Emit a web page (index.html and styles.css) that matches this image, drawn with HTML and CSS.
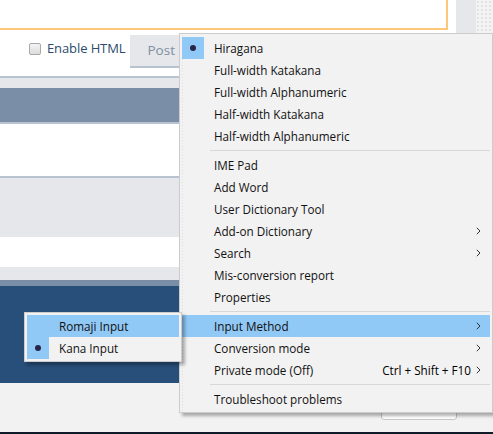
FILE: index.html
```html
<!DOCTYPE html>
<html>
<head>
<meta charset="utf-8">
<link rel="stylesheet" href="styles.css">
</head>
<body>
<div class="page">
  <div class="top">
    <div class="left-col">
      <div class="editor"></div>
      <div class="toolbar">
        <label class="check"><span class="box"></span><span class="check-label">Enable HTML</span></label>
        <div class="post">Post</div>
      </div>
    </div>
    <div class="gap"></div>
    <div class="track"></div>
    <div class="dots"></div>
  </div>
  <div class="band white h8"></div>
  <div class="band line"></div>
  <div class="band grey h10"></div>
  <div class="band slate h34"></div>
  <div class="band line"></div>
  <div class="band white h52"></div>
  <div class="band line"></div>
  <div class="band grey h59"></div>
  <div class="band white h30"></div>
  <div class="band grey h13"></div>
  <div class="band slate h6"></div>
  <div class="band navy h97"></div>
  <div class="band foot">
    <div class="foot-btn"></div>
  </div>
  <div class="band dark"></div>
</div>

<div class="menu main-menu">
  <div class="item checked"><span class="ic"><span class="dot"></span></span><span class="txt">Hiragana</span></div>
  <div class="item"><span class="ic"></span><span class="txt">Full-width Katakana</span></div>
  <div class="item"><span class="ic"></span><span class="txt">Full-width Alphanumeric</span></div>
  <div class="item"><span class="ic"></span><span class="txt">Half-width Katakana</span></div>
  <div class="item"><span class="ic"></span><span class="txt">Half-width Alphanumeric</span></div>
  <div class="sep"></div>
  <div class="item"><span class="ic"></span><span class="txt">IME Pad</span></div>
  <div class="item"><span class="ic"></span><span class="txt">Add Word</span></div>
  <div class="item"><span class="ic"></span><span class="txt">User Dictionary Tool</span></div>
  <div class="item"><span class="ic"></span><span class="txt">Add-on Dictionary</span><span class="arrow"><svg width="5" height="8" viewBox="0 0 5 8"><polyline points="0.8,0.8 4,4 0.8,7.2" fill="none" stroke="#333" stroke-width="1"/></svg></span></div>
  <div class="item"><span class="ic"></span><span class="txt">Search</span><span class="arrow"><svg width="5" height="8" viewBox="0 0 5 8"><polyline points="0.8,0.8 4,4 0.8,7.2" fill="none" stroke="#333" stroke-width="1"/></svg></span></div>
  <div class="item"><span class="ic"></span><span class="txt">Mis-conversion report</span></div>
  <div class="item"><span class="ic"></span><span class="txt">Properties</span></div>
  <div class="sep"></div>
  <div class="item hot"><span class="ic"></span><span class="txt">Input Method</span><span class="arrow"><svg width="5" height="8" viewBox="0 0 5 8"><polyline points="0.8,0.8 4,4 0.8,7.2" fill="none" stroke="#333" stroke-width="1"/></svg></span></div>
  <div class="item"><span class="ic"></span><span class="txt">Conversion mode</span><span class="arrow"><svg width="5" height="8" viewBox="0 0 5 8"><polyline points="0.8,0.8 4,4 0.8,7.2" fill="none" stroke="#333" stroke-width="1"/></svg></span></div>
  <div class="item"><span class="ic"></span><span class="txt">Private mode (Off)</span><span class="key">Ctrl + Shift + F10</span><span class="arrow"><svg width="5" height="8" viewBox="0 0 5 8"><polyline points="0.8,0.8 4,4 0.8,7.2" fill="none" stroke="#333" stroke-width="1"/></svg></span></div>
  <div class="sep"></div>
  <div class="item"><span class="ic"></span><span class="txt">Troubleshoot problems</span></div>
</div>

<div class="menu sub-menu">
  <div class="item hot"><span class="ic"></span><span class="txt">Romaji Input</span></div>
  <div class="item checked"><span class="ic"><span class="dot"></span></span><span class="txt">Kana Input</span></div>
</div>
</body>
</html>
```

FILE: styles.css
```css
html, body {
  margin: 0;
  padding: 0;
}
body {
  width: 493px;
  height: 434px;
  overflow: hidden;
  position: relative;
  background: #f2f2f2;
  font-family: "Open Sans", "Noto Sans", sans-serif;
}
.page {
  display: flex;
  flex-direction: column;
  width: 493px;
}
.top {
  display: flex;
  height: 68px;
  background: #fff;
}
.left-col {
  width: 448px;
  display: flex;
  flex-direction: column;
}
.editor {
  height: 28px;
  background: #fff;
  border-right: 2px solid #fcc67b;
  border-bottom: 2px solid #fcc67b;
}
.toolbar {
  height: 38px;
  display: flex;
  align-items: flex-end;
  padding-left: 29px;
}
.check {
  display: flex;
  align-items: center;
  height: 33px;
  align-self: flex-end;
  margin-bottom: 2px;
}
.box {
  width: 10px;
  height: 10px;
  border: 1px solid #a9a9a9;
  border-radius: 2px;
  background: linear-gradient(#f4f4f4, #dcdcdc);
  margin-right: 6px;
  margin-top: -2px;
}
.check-label {
  font-size: 13px;
  color: #2c4b6c;
  margin-top: -3px;
  letter-spacing: -0.1px;
}
.post {
  margin-left: 5px;
  width: 80px;
  height: 31px;
  background: #e6e7eb;
  border-bottom: 2px solid #b6c2d0;
  color: #7f8fa3;
  font-size: 13.5px;
  line-height: 31px;
  padding-left: 17px;
  box-sizing: content-box;
}
.gap { width: 8px; }
.track { width: 20px; background: #e6e7eb; }
.dots {
  flex: 1;
  background-color: #f3f3f3;
  background-image: radial-gradient(#d8d8d8 0.6px, transparent 0.9px);
  background-size: 4px 4px;
}
.band { width: 100%; }
.white { background: #fff; }
.grey { background: #e6e7eb; }
.slate { background: #7a8ea8; }
.navy { background: #284e7a; }
.line { height: 2px; background: #b7c3d1; }
.h6 { height: 6px; }
.h8 { height: 8px; }
.h10 { height: 10px; }
.h13 { height: 13px; }
.h30 { height: 30px; }
.h34 { height: 34px; }
.h52 { height: 52px; }
.h59 { height: 59px; }
.h97 { height: 97px; }
.foot {
  height: 49px;
  background: #f2f2f2;
  display: flex;
  align-items: flex-end;
  padding-left: 381px;
  box-sizing: border-box;
}
.foot-btn {
  width: 74px;
  height: 26px;
  margin-bottom: 12px;
  background: #fff;
  border: 1px solid #c6c6c6;
  border-radius: 0 0 3px 3px;
}
.dark { height: 2px; background: #0e1a26; }

/* menus */
.menu {
  position: absolute;
  background-color: #f2f2f2;
  border: 1px solid #cccccc;
  box-shadow: 3px 3px 3px rgba(0, 0, 0, 0.3);
  padding: 3px 2px 2px 2px;
  font-size: 11.7px;
  color: #000;
  background-image: radial-gradient(#dedede 0.6px, transparent 0.9px);
  background-size: 3px 3px;
  background-repeat: repeat-y;
  background-position: 1px 0;
}
.main-menu {
  left: 179px;
  top: 33px;
  width: 308px;
}
.sub-menu {
  left: 24px;
  top: 312px;
  width: 152px;
  padding-top: 2px;
}
.item {
  display: flex;
  align-items: center;
  height: 22px;
  position: relative;
}
.item .ic {
  width: 22px;
  height: 22px;
  display: flex;
  align-items: center;
  justify-content: center;
  flex: none;
}
.item.checked .ic { background: #90c8f6; }
.item.hot { background: #90c8f6; }
.dot {
  width: 6px;
  height: 6px;
  border-radius: 50%;
  background: #27264a;
}
.txt {
  margin-left: 10px;
  flex: 1;
  white-space: nowrap;
  color: #111;
}
.key {
  margin-right: 5px;
  white-space: nowrap;
}
.arrow {
  width: 5px;
  height: 8px;
  display: flex;
  margin-right: 9px;
}
.sep {
  height: 1px;
  background: #d7d7d7;
  margin: 3px 0 3px 28px;
}
```
